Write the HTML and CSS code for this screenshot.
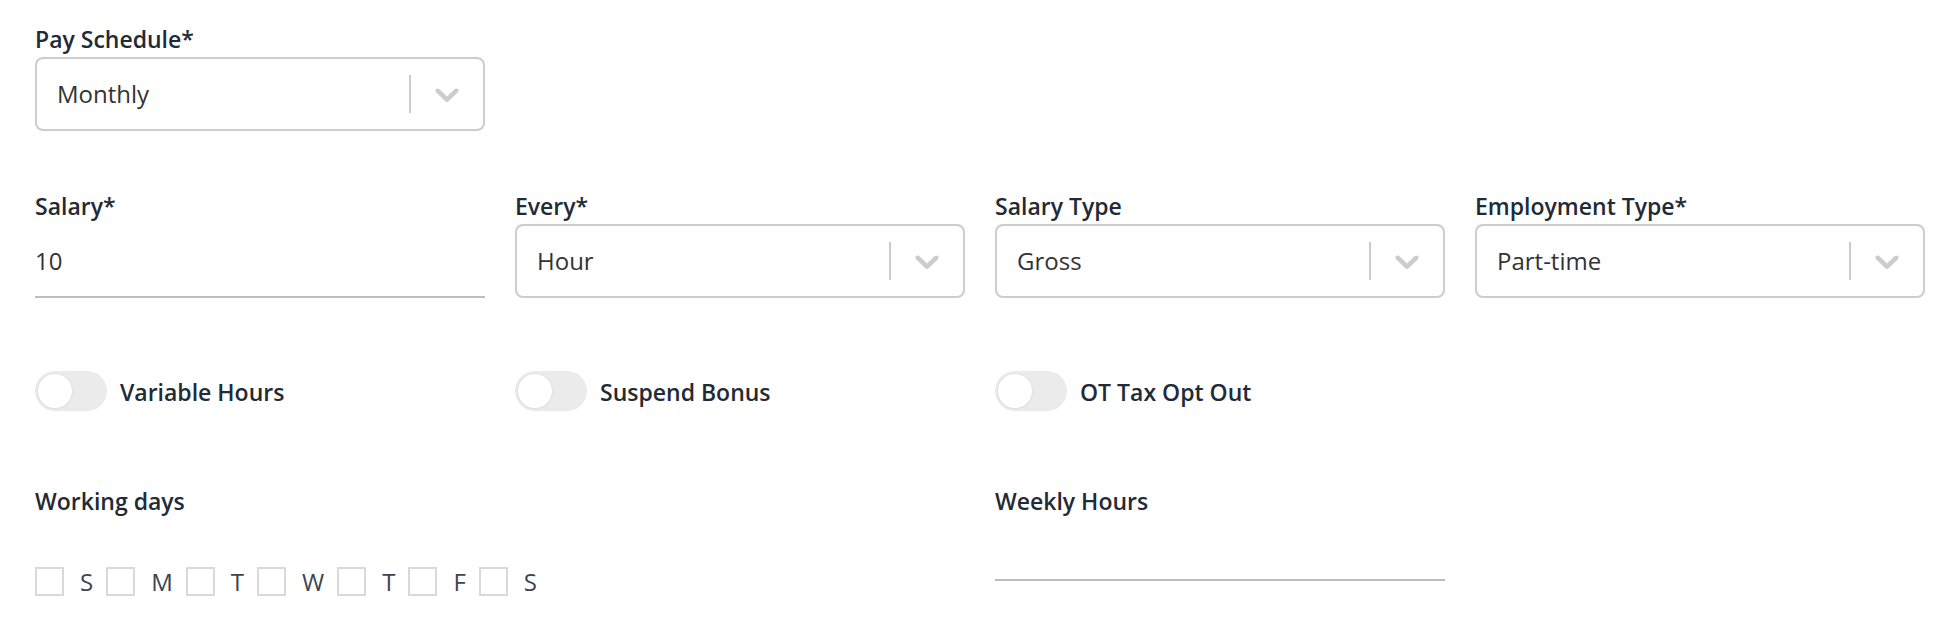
FILE: index.html
```html
<!DOCTYPE html>
<html lang="en">
<head>
<meta charset="utf-8">
<title>Pay form</title>
<link rel="stylesheet" href="styles.css">
</head>
<body>
<div class="form">
  <div class="row row-1">
    <div class="field">
      <div class="label">Pay Schedule*</div>
      <div class="select">
        <div class="select-value">Monthly</div>
        <div class="select-sep"></div>
        <div class="select-ind"><svg viewBox="0 0 20 20" width="40" height="40"><path d="M4.516 7.548c0.436-0.446 1.043-0.481 1.576 0l3.908 3.747 3.908-3.747c0.533-0.481 1.141-0.446 1.574 0 0.436 0.445 0.408 1.197 0 1.615-0.406 0.418-4.695 4.502-4.695 4.502-0.217 0.223-0.502 0.335-0.787 0.335s-0.57-0.112-0.789-0.335c0 0-4.287-4.084-4.695-4.502s-0.436-1.170 0-1.615z"/></svg></div>
      </div>
    </div>
  </div>

  <div class="row row-2">
    <div class="field">
      <div class="label">Salary*</div>
      <div class="text-input">10</div>
    </div>
    <div class="field">
      <div class="label">Every*</div>
      <div class="select">
        <div class="select-value">Hour</div>
        <div class="select-sep"></div>
        <div class="select-ind"><svg viewBox="0 0 20 20" width="40" height="40"><path d="M4.516 7.548c0.436-0.446 1.043-0.481 1.576 0l3.908 3.747 3.908-3.747c0.533-0.481 1.141-0.446 1.574 0 0.436 0.445 0.408 1.197 0 1.615-0.406 0.418-4.695 4.502-4.695 4.502-0.217 0.223-0.502 0.335-0.787 0.335s-0.57-0.112-0.789-0.335c0 0-4.287-4.084-4.695-4.502s-0.436-1.170 0-1.615z"/></svg></div>
      </div>
    </div>
    <div class="field">
      <div class="label">Salary Type</div>
      <div class="select">
        <div class="select-value">Gross</div>
        <div class="select-sep"></div>
        <div class="select-ind"><svg viewBox="0 0 20 20" width="40" height="40"><path d="M4.516 7.548c0.436-0.446 1.043-0.481 1.576 0l3.908 3.747 3.908-3.747c0.533-0.481 1.141-0.446 1.574 0 0.436 0.445 0.408 1.197 0 1.615-0.406 0.418-4.695 4.502-4.695 4.502-0.217 0.223-0.502 0.335-0.787 0.335s-0.57-0.112-0.789-0.335c0 0-4.287-4.084-4.695-4.502s-0.436-1.170 0-1.615z"/></svg></div>
      </div>
    </div>
    <div class="field">
      <div class="label">Employment Type*</div>
      <div class="select">
        <div class="select-value">Part-time</div>
        <div class="select-sep"></div>
        <div class="select-ind"><svg viewBox="0 0 20 20" width="40" height="40"><path d="M4.516 7.548c0.436-0.446 1.043-0.481 1.576 0l3.908 3.747 3.908-3.747c0.533-0.481 1.141-0.446 1.574 0 0.436 0.445 0.408 1.197 0 1.615-0.406 0.418-4.695 4.502-4.695 4.502-0.217 0.223-0.502 0.335-0.787 0.335s-0.57-0.112-0.789-0.335c0 0-4.287-4.084-4.695-4.502s-0.436-1.170 0-1.615z"/></svg></div>
      </div>
    </div>
  </div>

  <div class="row row-3">
    <div class="toggle-field"><span class="toggle"><span class="thumb"></span></span><span class="toggle-label">Variable Hours</span></div>
    <div class="toggle-field"><span class="toggle"><span class="thumb"></span></span><span class="toggle-label">Suspend Bonus</span></div>
    <div class="toggle-field"><span class="toggle"><span class="thumb"></span></span><span class="toggle-label">OT Tax Opt Out</span></div>
  </div>

  <div class="row row-4">
    <div class="field span-2">
      <div class="label">Working days</div>
      <div class="days">
        <span class="box"></span><span class="day">S</span>
        <span class="box"></span><span class="day">M</span>
        <span class="box"></span><span class="day">T</span>
        <span class="box"></span><span class="day">W</span>
        <span class="box"></span><span class="day">T</span>
        <span class="box"></span><span class="day">F</span>
        <span class="box"></span><span class="day">S</span>
      </div>
    </div>
    <div class="field">
      <div class="label">Weekly Hours</div>
      <div class="text-input weekly"></div>
    </div>
  </div>
</div>
</body>
</html>
```

FILE: styles.css
```css
* { box-sizing: border-box; }

body {
  margin: 0;
  background: #ffffff;
  font-family: "Open Sans", "Noto Sans", sans-serif;
  color: #333333;
}

.form {
  padding: 26px 36px 0 35px;
}

.row {
  display: grid;
  grid-template-columns: repeat(4, 450px);
  column-gap: 30px;
}

.row-2 { margin-top: 62px; }
.row-3 { margin-top: 73px; }
.row-4 { margin-top: 77px; }

.span-2 { grid-column: span 2; }

.label {
  font-size: 23px;
  line-height: 26px;
  font-weight: 600;
  color: #222a35;
  margin-bottom: 5px;
}

.select {
  height: 74px;
  border: 2px solid #cccccc;
  border-radius: 8px;
  display: flex;
  align-items: center;
}

.select-value {
  flex: 1;
  padding-left: 20px;
  font-size: 24px;
  line-height: 28px;
  color: #333333;
}

.select-sep {
  width: 2px;
  align-self: stretch;
  margin: 16px 0;
  background: #cccccc;
}

.select-ind {
  padding: 0 16px;
  display: flex;
  align-items: center;
}

.select-ind svg { fill: #cccccc; display: block; }

.text-input {
  padding: 23px 0 21px 0;
  font-size: 24px;
  line-height: 28px;
  color: #333333;
  border-bottom: 2px solid #bdbdbd;
  height: 74px;
}

.text-input.weekly {
  height: 62px;
}

.toggle-field {
  display: flex;
  align-items: center;
  height: 40px;
}

.toggle {
  width: 72px;
  height: 40px;
  border-radius: 20px;
  background: #ebebeb;
  padding: 3px;
  display: flex;
  align-items: center;
}

.thumb {
  width: 34px;
  height: 34px;
  border-radius: 50%;
  background: #ffffff;
  box-shadow: 0 0 0 1px #e2e2e2, 0 1px 2px rgba(0,0,0,0.08);
}

.toggle-label {
  margin-left: 13px;
  padding-top: 2px;
  font-size: 23px;
  line-height: 26px;
  font-weight: 600;
  color: #222a35;
}

.days {
  margin-top: 53px;
  display: flex;
  align-items: center;
}

.box {
  width: 29px;
  height: 29px;
  border: 2px solid #d9d9d9;
}

.day {
  margin: 0 13px 0 16px;
  font-size: 24px;
  line-height: 28px;
  color: #3d4450;
}
```
